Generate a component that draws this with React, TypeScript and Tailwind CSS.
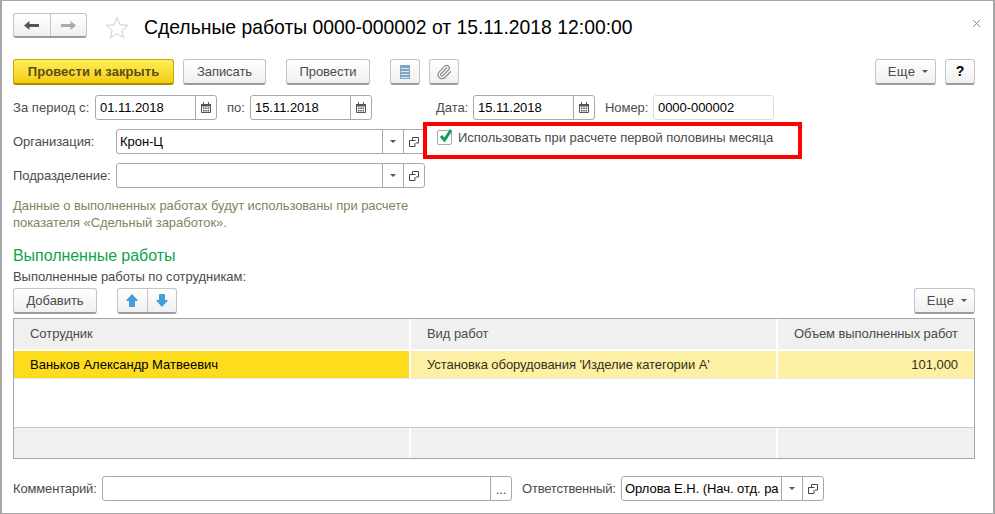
import React from 'react';
import { Paperclip, X } from 'lucide-react';

const btn =
  'h-[26px] flex items-center justify-center rounded-[3px] border border-[#c4c4c4] border-b-[#9c9c9c] border-b-2 bg-gradient-to-b from-white to-[#f0f0f0] text-[13px] text-[#4b4b4b] shrink-0';

const Caret = () => (
  <svg width="6" height="3" viewBox="0 0 6 3" className="shrink-0">
    <path d="M0 0h6L3 3z" fill="#555" />
  </svg>
);

const CalendarIcon = () => (
  <svg width="10" height="11" viewBox="0 0 10 11">
    <path d="M0.5 2.5h9v8h-9z" fill="#fff" stroke="#555" />
    <path d="M0 2h10v2.5H0z" fill="#555" />
    <path d="M2 5.5h1.5v1.500H2zM4.300 5.500h1.500v1.500H4.300zM6.600 5.500h1.500v1.500H6.600zM2 8h1.500v1.500H2zM4.300 8h1.500v1.500H4.300zM6.600 8h1.500v1.500H6.600z" fill="#555" />
    <path d="M2.500 0v2M7.500 0v2" stroke="#555" />
  </svg>
);

const OpenIcon = () => (
  <svg width="10" height="10" viewBox="0 0 10 10" fill="none" stroke="#444">
    <path d="M3.500 3V0.500h6v5.500H7" />
    <path d="M6.500 3.500H0.500v6h5.500V6" />
  </svg>
);

const ArrowIcon = ({ down }: { down?: boolean }) => (
  <svg width="12" height="13" viewBox="0 0 12 13" className={down ? 'rotate-180' : ''}>
    <path d="M6 0.500 11.500 6.500H8.500V12.500H3.500V6.500H0.500z" fill="#3f9fdc" stroke="#2f86c4" strokeWidth="0.7" />
  </svg>
);

const DateField = ({ value, w }: { value: string; w: string }) => (
  <div className={`${w} h-[25px] flex rounded-[3px] border border-[#a8a8a8] bg-white shrink-0`}>
    <span className="flex-1 pl-[4px] text-[13px] leading-[23px] text-black">{value}</span>
    <span className="w-[21px] flex items-center justify-center border-l border-[#a8a8a8]">
      <CalendarIcon />
    </span>
  </div>
);

const SelectField = ({ value, w, clip }: { value?: string; w: string; clip?: boolean }) => (
  <div className={`${w} h-[25px] flex rounded-[3px] border border-[#a8a8a8] bg-white shrink-0`}>
    <span className={`flex-1 min-w-0 pl-[3px] text-[13px] leading-[23px] text-black whitespace-nowrap ${clip ? 'overflow-hidden' : ''}`}>{value}</span>
    <span className="w-[21px] flex items-center justify-center border-l border-[#a8a8a8]">
      <Caret />
    </span>
    <span className="w-[21px] flex items-center justify-center border-l border-[#a8a8a8]">
      <OpenIcon />
    </span>
  </div>
);

const EmptyCell = ({ w }: { w: string }) => <div className={`${w} border-r-2 border-white last:border-r-0`} />;

export default function App() {
  return (
    <div className="relative w-[995px] h-[514px] overflow-hidden bg-white border border-[#a6a6a6] border-l-2 border-r-2 pl-[11px] pr-[18px] pt-[12px] font-['Liberation_Sans',Arial,sans-serif] text-[13px] tracking-[-0.05px] text-[#4b4b4b]">
      {/* Title */}
      <div className="flex items-center h-[25px]">
        <div className="w-[74px] h-[25px] flex rounded-[3px] border border-[#c4c4c4] border-b-[#9c9c9c] border-b-2 bg-gradient-to-b from-white to-[#f0f0f0]">
          <span className="flex-1 flex items-center justify-center border-r border-[#c4c4c4]">
            <svg width="15" height="11" viewBox="0 0 15 11"><path d="M0 5.500 5.500 1v3H15v3H5.500v3z" fill="#555" /></svg>
          </span>
          <span className="flex-1 flex items-center justify-center">
            <svg width="15" height="11" viewBox="0 0 15 11"><path d="M15 5.500 9.500 1v3H0v3h9.500v3z" fill="#aaa" /></svg>
          </span>
        </div>
        <svg width="24" height="23" viewBox="0 0 24 23" className="ml-[18px] mt-[4px] shrink-0">
          <path d="M12 1.500 15 8.800 22.800 9.300 16.800 14.300 18.700 21.800 12 17.700 5.300 21.800 7.200 14.300 1.200 9.300 9 8.800z" fill="none" stroke="#cfcfcf" />
        </svg>
        <h1 className="ml-[15px] mt-[4px] text-[19.35px] tracking-normal text-black whitespace-nowrap">Сдельные работы 0000-000002 от 15.11.2018 12:00:00</h1>
        <X className="ml-auto mr-[-8px] -mt-[4px] w-[13px] h-[13px] text-[#777]" strokeWidth={1.5} />
      </div>

      {/* Toolbar */}
      <div className="flex items-center mt-[21px]">
        <button className="h-[26px] w-[161px] rounded-[3px] border border-[#c9a800] border-b-2 border-b-[#a98d00] bg-gradient-to-b from-[#ffee55] to-[#f2cc00] text-[13px] font-bold tracking-[0.06px] text-[#5a4f10]">Провести и закрыть</button>
        <button className={`${btn} w-[83px] ml-[9px]`}>Записать</button>
        <button className={`${btn} w-[84px] ml-[20px]`}>Провести</button>
        <button className={`${btn} w-[30px] ml-[20px]`}>
          <svg width="10" height="14" viewBox="0 0 10 14">
            <path d="M0 0h10v14H0z" fill="#7fa6c4" />
            <path d="M1 3.500h8M1 6.500h8M1 9.500h8M1 12.500h8" stroke="#dbe6ef" />
          </svg>
        </button>
        <button className={`${btn} w-[30px] ml-[9px]`}>
          <Paperclip className="w-[16px] h-[16px] text-[#8a8a8a]" strokeWidth={1.8} />
        </button>
        <button className={`${btn} w-[61px] ml-auto gap-[7px] pl-[5px] tracking-[0.4px]`}>Еще <Caret /></button>
        <button className={`${btn} w-[30px] ml-[9px] font-bold text-black text-[14px]`}>?</button>
      </div>

      {/* Period */}
      <div className="flex items-center mt-[10px]">
        <span className="w-[82px] tracking-[0.05px]">За период с:</span>
        <DateField value="01.11.2018" w="w-[122px]" />
        <span className="ml-[10px] w-[23px]">по:</span>
        <DateField value="15.11.2018" w="w-[122px]" />
        <span className="ml-[64px] w-[37px]">Дата:</span>
        <DateField value="15.11.2018" w="w-[122px]" />
        <span className="ml-[10px] w-[48px]">Номер:</span>
        <div className="w-[121px] h-[25px] rounded-[3px] border border-[#dcdcdc] pl-[4px] leading-[23px] text-black">0000-000002</div>
      </div>

      {/* Organisation */}
      <div className="flex items-center mt-[9px]">
        <span className="w-[103px]">Организация:</span>
        <SelectField value="Крон-Ц" w="w-[309px]" />
        <label className="ml-[12px] -mt-[8px] flex items-center gap-[6px] whitespace-nowrap">
          <span className="relative w-[15px] h-[15px] rounded-[2px] border border-[#a8a8a8] bg-white">
            <svg width="16" height="15" viewBox="0 0 16 15" className="absolute left-0 -top-[3px]">
              <path d="M3 8l3.500 4L13 2" fill="none" stroke="#0f9d58" strokeWidth="3" />
            </svg>
          </span>
          Использовать при расчете первой половины месяца
        </label>
      </div>
      <div className="flex items-center mt-[9px]">
        <span className="w-[103px]">Подразделение:</span>
        <SelectField w="w-[309px]" />
      </div>

      {/* Note */}
      <p className="mt-[9px] w-[410px] leading-[17px] text-[#85825f]">
        Данные о выполненных работах будут использованы при расчете показателя «Сдельный заработок».
      </p>

      {/* Section */}
      <h2 className="mt-[15px] text-[16px] leading-[20px] text-[#0ea44b]">Выполненные работы</h2>
      <div className="mt-[3px] leading-[16px]">Выполненные работы по сотрудникам:</div>
      <div className="flex items-center mt-[3px]">
        <button className={`${btn} w-[84px]`}>Добавить</button>
        <div className="ml-[20px] w-[60px] h-[26px] flex rounded-[3px] border border-[#c4c4c4] border-b-[#9c9c9c] border-b-2 bg-gradient-to-b from-white to-[#f0f0f0]">
          <span className="flex-1 flex items-center justify-center border-r border-[#c4c4c4]"><ArrowIcon /></span>
          <span className="flex-1 flex items-center justify-center"><ArrowIcon down /></span>
        </div>
        <button className={`${btn} w-[61px] ml-auto gap-[7px] pl-[5px] tracking-[0.4px]`}>Еще <Caret /></button>
      </div>

      {/* Table */}
      <div className="mt-[4px] w-[962px] h-[141px] border border-[#a6a6a6] flex flex-col">
        <div className="h-[32px] flex bg-[#f0f0f0] border-b-2 border-white leading-[29px] shrink-0">
          <div className="w-[397px] pl-[16px] border-r-2 border-white">Сотрудник</div>
          <div className="w-[367px] pl-[16px] border-r-2 border-white">Вид работ</div>
          <div className="flex-1 pr-[16px] text-right tracking-[-0.08px]">Объем выполненных работ</div>
        </div>
        <div className="h-[28px] flex bg-[#fdf0a4] border-b border-[#e8e8e8] leading-[27px] text-[#33301a] shrink-0">
          <div className="w-[397px] pl-[16px] border-r-2 border-white bg-[#fddc1e] tracking-normal text-black">Ваньков Александр Матвеевич</div>
          <div className="w-[367px] pl-[16px] border-r-2 border-white tracking-[-0.07px]">Установка оборудования 'Изделие категории А'</div>
          <div className="flex-1 pr-[16px] text-right">101,000</div>
        </div>
        <div className="flex-1" />
        <div className="h-[31px] flex bg-[#f0f0f0] border-t border-[#c8c8c8] shrink-0">
          <EmptyCell w="w-[397px]" />
          <EmptyCell w="w-[367px]" />
          <EmptyCell w="flex-1" />
        </div>
      </div>

      {/* Footer */}
      <div className="flex items-center mt-[17px]">
        <span className="w-[89px] tracking-[-0.15px]">Комментарий:</span>
        <div className="w-[410px] h-[25px] flex rounded-[3px] border border-[#a8a8a8] bg-white">
          <span className="flex-1" />
          <span className="w-[21px] border-l border-[#a8a8a8] text-center leading-[25px]">...</span>
        </div>
        <span className="ml-[10px] w-[99px] tracking-[-0.2px]">Ответственный:</span>
        <SelectField value="Орлова Е.Н. (Нач. отд. ра" w="w-[203px]" clip />
      </div>

      {/* Annotation */}
      <div className="absolute left-[421px] top-[121px] w-[379px] h-[37px] border-[4px] border-[#ff0000]" />
    </div>
  );
}
